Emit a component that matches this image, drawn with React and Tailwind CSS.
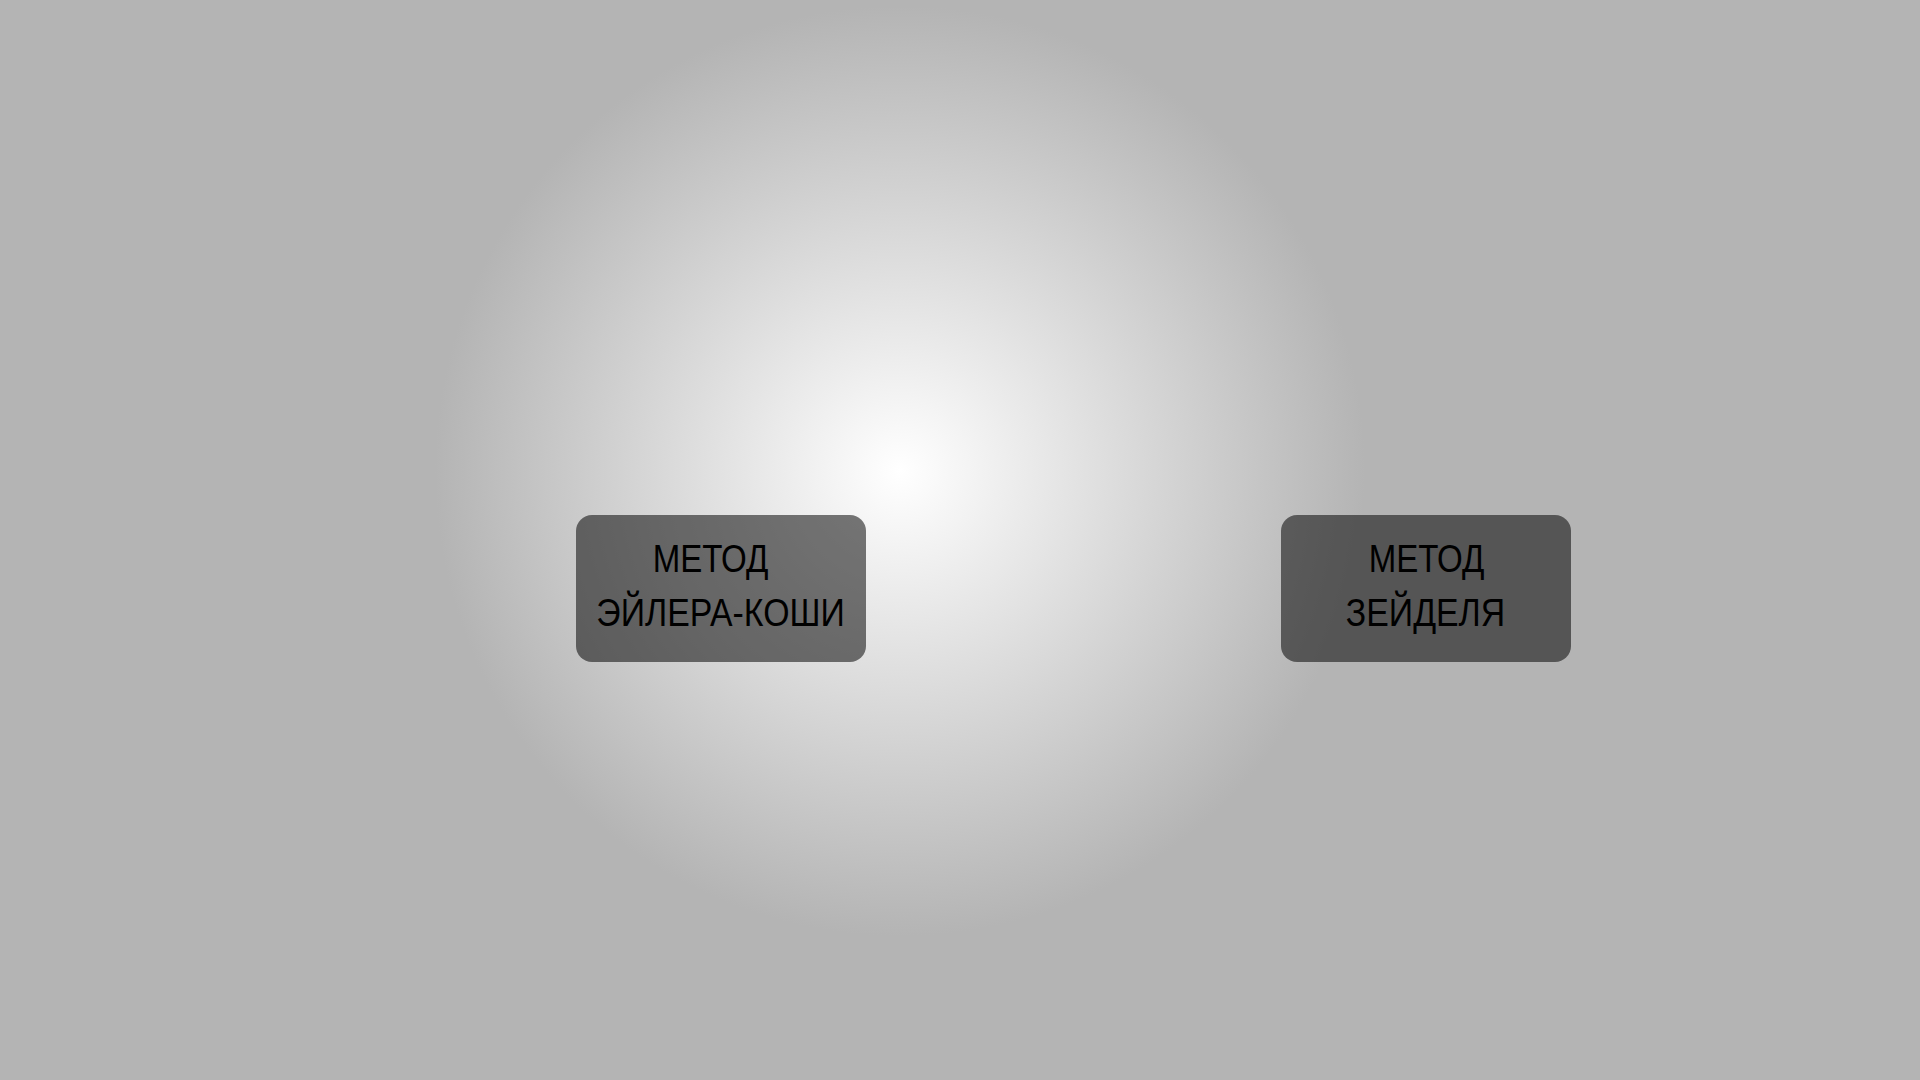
export default function App() {
  return (
    <div className="w-full h-screen overflow-hidden bg-[#b4b4b4] bg-[radial-gradient(circle_465px_at_900px_471px,#ffffff_0%,#b4b4b4_100%)]">
      <div className="flex pt-[515px] pl-[576px] gap-[415px]">
        <button className="w-[290px] h-[147px] rounded-[16px] bg-black/[0.53] flex flex-col items-center justify-center text-black text-[38px] leading-[54px] font-['Liberation_Sans',Arial,sans-serif] pb-[6px]">
          <span className="inline-block scale-x-[0.87] mr-[22px]">МЕТОД</span>
          <span className="inline-block scale-x-[0.89] whitespace-nowrap">ЭЙЛЕРА-КОШИ</span>
        </button>
        <button className="w-[290px] h-[147px] rounded-[16px] bg-black/[0.53] flex flex-col items-center justify-center text-black text-[38px] leading-[54px] font-['Liberation_Sans',Arial,sans-serif] pb-[6px]">
          <span className="inline-block scale-x-[0.87]">МЕТОД</span>
          <span className="inline-block scale-x-[0.89] whitespace-nowrap">ЗЕЙДЕЛЯ</span>
        </button>
      </div>
    </div>
  );
}
